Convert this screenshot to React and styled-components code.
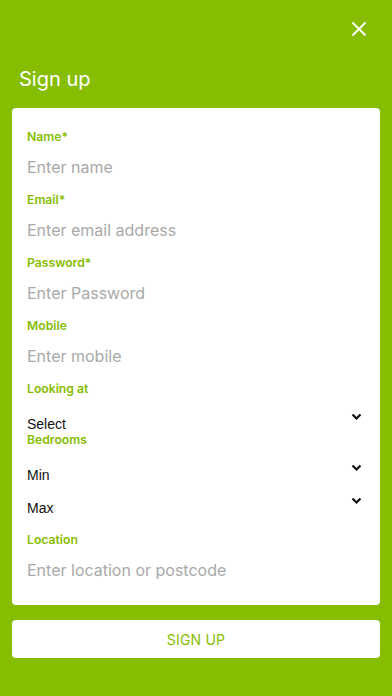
import React from "react";
import styled, { createGlobalStyle } from "styled-components";

const green = "#86bd00";

const GlobalStyle = createGlobalStyle`
  html, body {
    margin: 0;
    padding: 0;
    background: ${green};
  }
  body {
    font-family: Inter, "Open Sans", sans-serif;
  }
  * { box-sizing: border-box; }
`;

const Screen = styled.div`
  min-height: 696px;
  background: ${green};
  padding: 0 12px 38px;
  display: flex;
  flex-direction: column;
`;

const TopBar = styled.div`
  height: 56px;
  display: flex;
  justify-content: flex-end;
  align-items: flex-start;
  padding: 21px 13px 0 0;
`;

const CloseButton = styled.button`
  background: none;
  border: none;
  padding: 0;
  width: 16px;
  height: 16px;
  cursor: pointer;
  display: flex;
`;

const Title = styled.h1`
  margin: 8px 0 14px 7px;
  font-size: 20px;
  line-height: 30px;
  font-weight: 400;
  color: #fff;
`;

const Card = styled.div`
  background: #fff;
  border-radius: 4px;
  padding: 18px 18px 13px 15px;
  display: flex;
  flex-direction: column;
`;

const Label = styled.label`
  display: block;
  font-size: 12.2px;
  line-height: 15px;
  padding-top: 3px;
  font-weight: 600;
  color: ${green};
  margin-top: ${({ $gap }) => $gap || 0}px;
`;

const TextInput = styled.input`
  display: block;
  width: 100%;
  height: 45px;
  border: none;
  outline: none;
  padding: 0;
  font-family: inherit;
  font-size: 16px;
  color: #333;
  background: transparent;
  &::placeholder {
    color: #a9a9a9;
  }
`;

const SelectBox = styled.div`
  height: 33px;
  display: flex;
  justify-content: space-between;
  align-items: flex-end;
  cursor: pointer;
`;

const SelectText = styled.span`
  font-family: "Liberation Sans", Arial, sans-serif;
  font-size: 14px;
  line-height: 14px;
  margin-bottom: -2px;
  color: #111;
`;

const Chevron = styled.svg`
  width: 11px;
  height: 8px;
  margin: 0 0 8px 0;
`;

const SubmitButton = styled.button`
  margin-top: 15px;
  height: 38px;
  border: none;
  border-radius: 4px;
  background: #fff;
  color: ${green};
  font-family: inherit;
  font-size: 14px;
  letter-spacing: 0.2px;
  cursor: pointer;
`;

const fields = [
  { label: "Name*", placeholder: "Enter name" },
  { label: "Email*", placeholder: "Enter email address" },
  { label: "Password*", placeholder: "Enter Password" },
  { label: "Mobile", placeholder: "Enter mobile" },
];

const Select = ({ text }) => (
  <SelectBox>
    <SelectText>{text}</SelectText>
    <Chevron viewBox="0 0 11 8">
      <path d="M1.5 1.5 L5.5 5.5 L9.5 1.5" fill="none" stroke="#111" strokeWidth="2.2" />
    </Chevron>
  </SelectBox>
);

const App = () => {
  return (
    <>
      <GlobalStyle />
      <Screen>
        <TopBar>
          <CloseButton aria-label="Close">
            <svg width="16" height="16" viewBox="0 0 16 16">
              <path d="M2 2 L14 14 M14 2 L2 14" stroke="#fff" strokeWidth="1.8" strokeLinecap="round" />
            </svg>
          </CloseButton>
        </TopBar>
        <Title>Sign up</Title>
        <Card>
          {fields.map((f) => (
            <div key={f.label}>
              <Label>{f.label}</Label>
              <TextInput placeholder={f.placeholder} type={f.label.startsWith("Password") ? "password" : "text"} />
            </div>
          ))}
          <Label>Looking at</Label>
          <Select text="Select" />
          <Label>Bedrooms</Label>
          <Select text="Min" />
          <Select text="Max" />
          <Label $gap={16}>Location</Label>
          <TextInput placeholder="Enter location or postcode" />
        </Card>
        <SubmitButton>SIGN UP</SubmitButton>
      </Screen>
    </>
  );
};

export default App;
